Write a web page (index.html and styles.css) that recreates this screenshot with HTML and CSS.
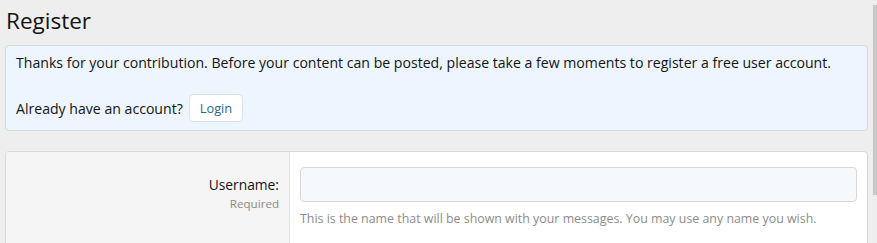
FILE: index.html
```html
<!DOCTYPE html>
<html lang="en">
<head>
<meta charset="utf-8">
<title>Register</title>
<link rel="stylesheet" href="styles.css">
</head>
<body>
<div class="page">
  <h1 class="title">Register</h1>
  <div class="notice">
    <p class="notice-text">Thanks for your contribution. Before your content can be posted, please take a few moments to register a free user account.</p>
    <div class="notice-row">
      <span>Already have an account?</span>
      <a class="btn" href="#">Login</a>
    </div>
  </div>
  <div class="form-block">
    <div class="form-row">
      <div class="label-col">
        <div class="label">Username:</div>
        <div class="hint">Required</div>
      </div>
      <div class="input-col">
        <div class="input"></div>
        <div class="explain">This is the name that will be shown with your messages. You may use any name you wish.</div>
      </div>
    </div>
  </div>
</div>
<div class="scrollbar"></div>
</body>
</html>
```
FILE: styles.css
```css
html, body {
  margin: 0;
  padding: 0;
  background: #eeeeee;
  font-family: "Open Sans", "Noto Sans", sans-serif;
  color: #141414;
  overflow: hidden;
}
.page {
  padding: 0 9px 0 5px;
}
.title {
  margin: 0;
  padding: 5px 0 0 1px;
  font-size: 22.5px;
  font-weight: 400;
  line-height: 32px;
  height: 40px;
}
.notice {
  background: #edf5fe;
  border: 1px solid #d3d9df;
  border-radius: 4px;
  padding: 7px 10px 6px 10px;
  font-size: 14.1px;
  height: 71px;
}
.notice-text {
  margin: 0;
  line-height: 20px;
}
.notice-row {
  display: flex;
  align-items: center;
  gap: 6px;
  margin-top: 21px;
}
.btn {
  display: inline-block;
  background: #ffffff;
  border: 1px solid #dcdfe3;
  border-radius: 4px;
  color: #2a6497;
  text-decoration: none;
  font-size: 12.8px;
  padding: 0 10px;
  line-height: 26px;
}
.form-block {
  margin-top: 20px;
  background: #ffffff;
  border: 1px solid #d8d8d8;
  border-radius: 4px 4px 0 0;
  height: 100px;
  overflow: hidden;
}
.form-row {
  display: flex;
  height: 100%;
}
.label-col {
  width: 273px;
  background: #f5f5f5;
  border-right: 1px solid #e4e4e4;
  padding: 23px 10px 0 0;
  text-align: right;
}
.label {
  font-size: 13.8px;
  line-height: 20px;
}
.hint {
  font-size: 11.6px;
  color: #8a8a8a;
  line-height: 18px;
}
.input-col {
  flex: 1;
  padding: 15px 10px 0 10px;
}
.input {
  height: 33px;
  background: #f5f9fd;
  border: 1px solid #d8d8d8;
  border-radius: 4px;
}
.explain {
  margin-top: 8px;
  font-size: 12.4px;
  color: #8c8c8c;
  line-height: 18px;
}
.scrollbar {
  position: absolute;
  right: 0;
  top: 5px;
  width: 4px;
  height: 190px;
  background: #c8c8c8;
}
```
